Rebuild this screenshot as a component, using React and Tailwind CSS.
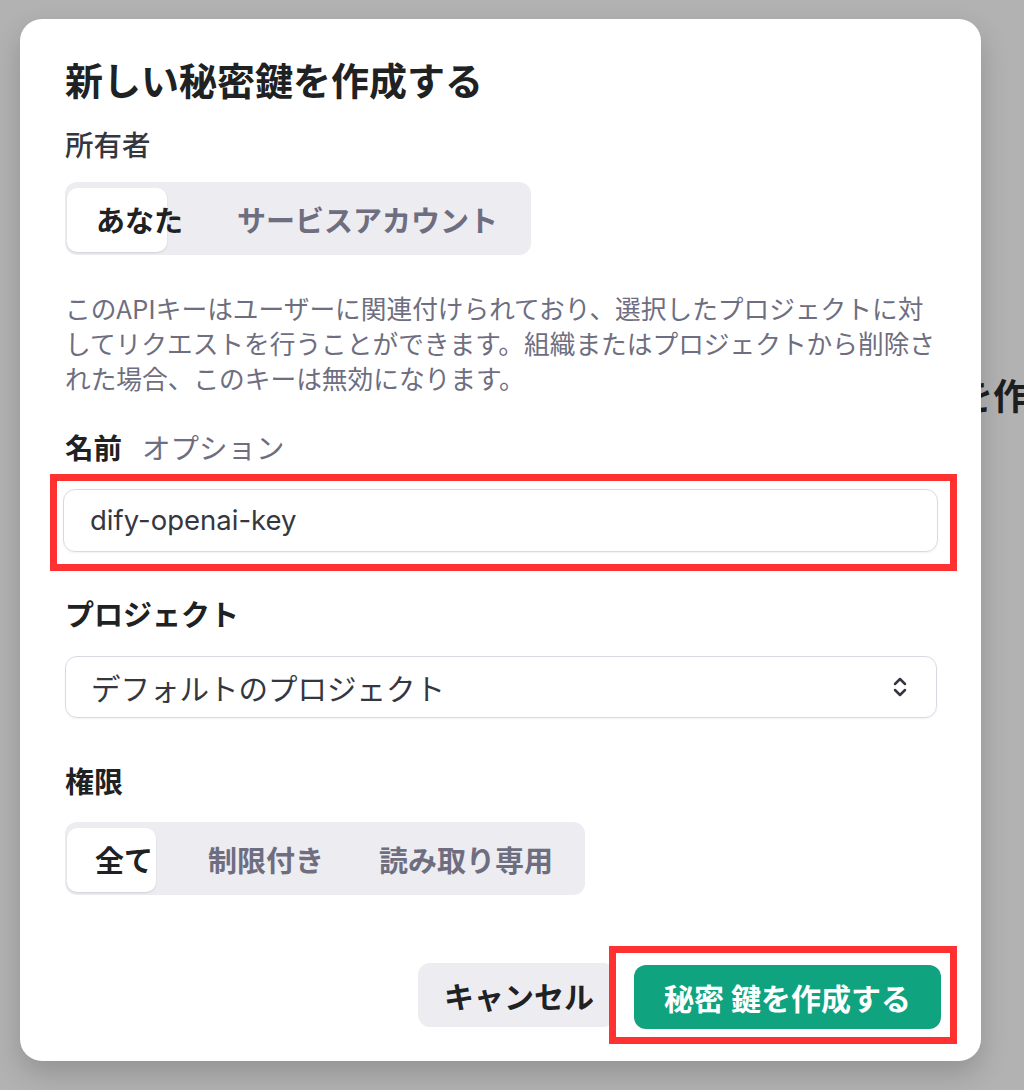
import React from 'react';
import { ChevronsUpDown } from 'lucide-react';

const font = {
  fontFamily: '"Noto Sans CJK JP", "Noto Sans", Inter, sans-serif',
};

const App = () => {
  return (
    <div className="relative min-h-screen w-full overflow-hidden bg-[#b2b2b2]" style={font}>
      {/* page behind the dialog */}
      <div className="absolute left-[957px] top-[372px] whitespace-nowrap text-[36px] font-bold leading-[44px] text-[#1e1e1e]">
        を作成
      </div>

      <div className="relative pl-[20px] pt-[19px]">
        <div className="w-[961px] rounded-[22px] bg-white pb-[17px] pl-[45px] pr-[44px] pt-[38px] shadow-[0_12px_28px_rgba(0,0,0,0.18)]">
          {/* Title */}
          <h1 className="whitespace-nowrap text-[38px] font-bold leading-[44px] text-[#202123]">
            新しい秘密鍵を作成する
          </h1>

          {/* Owner */}
          <div className="mt-[23px] text-[28.5px] font-medium leading-[40px] text-[#353740]">所有者</div>
          <div className="mt-[18px] flex h-[73px] w-[466px] rounded-[12px] bg-[#ececf1] pb-[3px] pl-[2px] pt-[6px]">
            <div className="flex h-[64px] w-[100px] items-center whitespace-nowrap rounded-[10px] bg-white pl-[29px] text-[29px] font-semibold text-[#202123] shadow-[0_1px_2px_rgba(0,0,0,0.12)]">
              あなた
            </div>
            <div className="flex h-[64px] items-center whitespace-nowrap pl-[70px] text-[29px] font-semibold text-[#6e6e80]">
              サービスアカウント
            </div>
          </div>

          {/* Description */}
          <p className="mt-[35px] whitespace-nowrap text-[25.7px] leading-[35px] text-[#6e6e80]">
            このAPIキーはユーザーに関連付けられており、選択したプロジェクトに対
            <br />
            してリクエストを行うことができます。組織またはプロジェクトから削除さ
            <br />
            れた場合、このキーは無効になります。
          </p>

          {/* Name */}
          <div className="mt-[32px] flex items-center gap-[20px] text-[28.5px] leading-[40px]">
            <span className="font-semibold text-[#202123]">名前</span>
            <span className="text-[#6e6e80]">オプション</span>
          </div>
          <div className="-ml-[15px] -mr-[20px] mt-[7px] border-[7px] border-[#ff3131] pb-[12px] pl-[6px] pr-[12px] pt-[8px]">
            <div className="flex h-[63px] items-center rounded-[12px] border border-[#d9d9e3] px-[26px] text-[27.5px] text-[#353740] shadow-[0_1px_2px_rgba(0,0,0,0.06)]">
              <span style={{ fontFamily: 'Inter, "Noto Sans", sans-serif' }}>dify-openai-key</span>
            </div>
          </div>

          {/* Project */}
          <div className="mt-[22px] text-[29px] font-semibold leading-[40px] text-[#202123]">プロジェクト</div>
          <div className="mt-[23px] flex h-[62px] items-center justify-between rounded-[12px] border border-[#d9d9e3] pl-[25px] pr-[24px] text-[29.5px] text-[#353740] shadow-[0_1px_2px_rgba(0,0,0,0.06)]">
            <span>デフォルトのプロジェクト</span>
            <ChevronsUpDown size={24} strokeWidth={2.5} className="text-[#353740]" />
          </div>

          {/* Permissions */}
          <div className="mt-[42px] text-[29px] font-semibold leading-[40px] text-[#202123]">権限</div>
          <div className="mt-[22px] flex h-[73px] w-[520px] rounded-[12px] bg-[#ececf1] pb-[3px] pl-[2px] pt-[6px]">
            <div className="flex h-[64px] w-[89px] items-center whitespace-nowrap rounded-[10px] bg-white pl-[28px] text-[29px] font-semibold text-[#202123] shadow-[0_1px_2px_rgba(0,0,0,0.12)]">
              全て
            </div>
            <div className="flex h-[64px] items-center whitespace-nowrap pl-[52px] text-[29px] font-semibold text-[#6e6e80]">
              制限付き
            </div>
            <div className="flex h-[64px] items-center whitespace-nowrap pl-[55px] text-[29px] font-semibold text-[#6e6e80]">
              読み取り専用
            </div>
          </div>

          {/* Footer */}
          <div className="-mr-[20px] mt-[51px] flex items-center justify-end">
            <button className="flex h-[64px] w-[197px] items-center whitespace-nowrap rounded-[12px] bg-[#ececf1] pl-[26px] text-[30px] font-bold text-[#202123]">
              キャンセル
            </button>
            <div className="relative z-10 -ml-[6px] border-[7px] border-[#ff3131] bg-white pb-[8px] pl-[18px] pr-[9px] pt-[12px]">
              <button className="flex h-[64px] w-[307px] items-center justify-center whitespace-nowrap rounded-[12px] bg-[#10a37f] text-[30px] font-bold text-white">
                秘密 鍵を作成する
              </button>
            </div>
          </div>
        </div>
      </div>
    </div>
  );
};

export default App;
